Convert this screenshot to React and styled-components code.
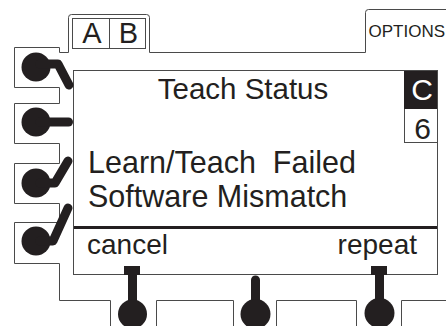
import React from "react";
import styled, { createGlobalStyle } from "styled-components";

const INK = "#231f20";
const LINE = "#4a4a4a";

const GlobalStyle = createGlobalStyle`
  html, body {
    margin: 0;
    padding: 0;
    background: #fff;
  }
  body {
    font-family: "Liberation Sans", Arial, sans-serif;
    color: ${INK};
  }
`;

const Stage = styled.div`
  position: relative;
  width: 446px;
  height: 326px;
  overflow: hidden;
  background: #fff;
`;

const TopStrip = styled.div`
  display: flex;
  align-items: flex-start;
  height: 70px;
`;

const ModeTabs = styled.div`
  box-sizing: border-box;
  display: flex;
  width: 74px;
  height: 31px;
  margin: 18px 0 0 72px;
  border: 1px solid ${LINE};
`;

const ModeTab = styled.div`
  flex: ${(p) => (p.$first ? "0 0 37px" : "1")};
  box-sizing: border-box;
  border-right: ${(p) => (p.$first ? `1px solid ${LINE}` : "none")};
  font-size: 29px;
  line-height: 28px;
  text-align: center;
  padding-left: 2px;
`;

const OptionsLabel = styled.div`
  margin: 23px 1px 0 auto;
  font-size: 17px;
  line-height: 17px;
`;

const Screen = styled.div`
  box-sizing: border-box;
  display: flex;
  flex-direction: column;
  width: 365px;
  height: 205px;
  margin-left: 73px;
  border: 1px solid ${LINE};
`;

const ScreenHead = styled.div`
  display: flex;
  height: 72px;
`;

const Title = styled.div`
  flex: 1;
  padding-left: 8px;
  text-align: center;
  font-size: 29.5px;
  line-height: 36px;
`;

const PageColumn = styled.div`
  display: flex;
  flex-direction: column;
  width: 33px;
`;

const PageBadge = styled.div`
  height: 38px;
  padding-left: 3px;
  background: ${INK};
  color: #fff;
  text-align: center;
  font-size: 30px;
  line-height: 38px;
`;

const PageNumber = styled.div`
  box-sizing: border-box;
  height: 34px;
  padding: 6px 0 0 3px;
  border-left: 1px solid ${LINE};
  border-bottom: 1px solid ${LINE};
  text-align: center;
  font-size: 30px;
  line-height: 27px;
`;

const Message = styled.div`
  flex: 1;
  padding: 2px 0 0 14px;
  font-size: 30.5px;
  line-height: 34px;
  white-space: pre;
`;

const SoftBar = styled.div`
  box-sizing: border-box;
  display: flex;
  justify-content: space-between;
  height: 48px;
  padding: 0 20px 0 13px;
  border-top: 3px solid ${INK};
  font-size: 28px;
  line-height: 32px;
`;

const Art = styled.svg`
  position: absolute;
  left: 0;
  top: 0;
  pointer-events: none;
`;

const leftKnobs = [
  { cy: 67, arm: "40,64 58,64 69,85" },
  { cy: 122, arm: "40,122 68.5,122" },
  { cy: 183, arm: "40,183 55,183 68,161" },
  { cy: 241, arm: "40,241 53,241 68,208" },
];

function PanelArt() {
  return (
    <Art width="446" height="326" viewBox="0 0 446 326">
      <g fill="none" stroke={LINE} strokeWidth="1">
        <path d="M110.5 326 V300.5 H59.5 V263.5 H14.5 V222.5 H59.5 V203.5 H14.5 V163.5 H59.5 V143.5 H14.5 V103.5 H59.5 V87.5 H14.5 V47.5 H59.5 V52.5 H68.5 V17.5 Q68.5 14.5 71.5 14.5 H146.5 Q149.5 14.5 149.5 17.5 V52.5 H365.5 V12.5 Q365.5 9.5 368.5 9.5 H446" />
        <path d="M156.5 326 V300.5 H233.5 V326" />
        <path d="M276.5 326 V300.5 H356.5 V326" />
        <path d="M401.5 326 V300.5 H446" />
      </g>
      <g fill={INK}>
        {leftKnobs.map((k) => (
          <g key={k.cy}>
            <circle cx="36" cy={k.cy} r="14.5" />
            <polyline
              points={k.arm}
              fill="none"
              stroke={INK}
              strokeWidth="9"
              strokeLinecap="round"
              strokeLinejoin="round"
            />
          </g>
        ))}
        <rect x="124" y="266" width="16" height="9" />
        <line x1="132.5" y1="270" x2="132.5" y2="302" stroke={INK} strokeWidth="9" />
        <circle cx="132.5" cy="314" r="14.5" />
        <line x1="255.5" y1="280" x2="255.5" y2="302" stroke={INK} strokeWidth="9" strokeLinecap="round" />
        <circle cx="255.5" cy="314" r="15" />
        <rect x="371" y="266" width="16" height="9" />
        <line x1="379.5" y1="270" x2="379.5" y2="302" stroke={INK} strokeWidth="9" />
        <circle cx="379.5" cy="313" r="15" />
      </g>
    </Art>
  );
}

export default function App() {
  return (
    <Stage>
      <GlobalStyle />
      <TopStrip>
        <ModeTabs>
          <ModeTab $first>A</ModeTab>
          <ModeTab>B</ModeTab>
        </ModeTabs>
        <OptionsLabel>OPTIONS</OptionsLabel>
      </TopStrip>
      <Screen>
        <ScreenHead>
          <Title>Teach Status</Title>
          <PageColumn>
            <PageBadge>C</PageBadge>
            <PageNumber>6</PageNumber>
          </PageColumn>
        </ScreenHead>
        <Message>
          {"Learn/Teach  Failed"}
          <br />
          {"Software Mismatch"}
        </Message>
        <SoftBar>
          <span>cancel</span>
          <span>repeat</span>
        </SoftBar>
      </Screen>
      <PanelArt />
    </Stage>
  );
}
